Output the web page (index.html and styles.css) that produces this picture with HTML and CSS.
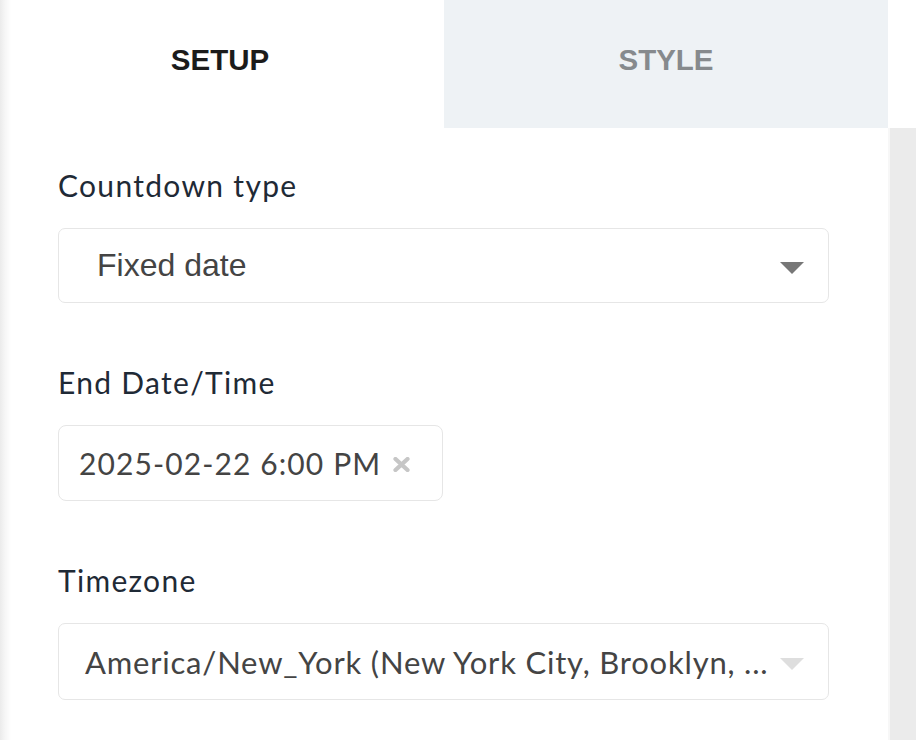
FILE: index.html
```html
<!DOCTYPE html>
<html lang="en">
<head>
<meta charset="utf-8">
<title>Countdown setup</title>
<link rel="stylesheet" href="styles.css">
</head>
<body>
<div class="panel">
  <div class="tabs">
    <div class="tab tab-active">SETUP</div>
    <div class="tab tab-idle">STYLE</div>
  </div>
  <div class="content">
    <div class="field">
      <div class="label">Countdown type</div>
      <div class="select select-wide">
        <span class="select-text">Fixed date</span>
        <span class="caret caret-dark"></span>
      </div>
    </div>
    <div class="field">
      <div class="label">End Date/Time</div>
      <div class="datebox">
        <span class="date-text">2025-02-22 6:00 PM</span>
        <svg class="clear" width="17" height="15" viewBox="0 0 17 15" aria-hidden="true">
          <path d="M2.5 2 L14.5 13 M14.5 2 L2.5 13" stroke="#c6c6c6" stroke-width="4.2" stroke-linecap="round"/>
        </svg>
      </div>
    </div>
    <div class="field">
      <div class="label">Timezone</div>
      <div class="select select-wide tz">
        <span class="tz-text">America/New_York (New York City, Brooklyn, ...</span>
        <span class="caret caret-light"></span>
      </div>
    </div>
  </div>
</div>
<div class="scroll">
  <div class="scroll-top"></div>
  <div class="scroll-track"></div>
</div>
</body>
</html>
```
FILE: styles.css
```css
html, body {
  margin: 0;
  padding: 0;
  height: 740px;
  overflow: hidden;
  background: #ffffff;
}
body {
  display: flex;
  font-family: "Lato", "Open Sans", sans-serif;
}
.panel {
  flex: 0 0 888px;
  height: 740px;
  background: linear-gradient(to right, #ebebeb 0px, #f6f6f6 5px, #ffffff 11px);
  display: flex;
  flex-direction: column;
}
.tabs {
  display: grid;
  grid-template-columns: 444px 444px;
  height: 128px;
}
.tab {
  display: flex;
  align-items: center;
  justify-content: center;
  font-family: "Liberation Sans", Arial, sans-serif;
  font-weight: 700;
  font-size: 29.5px;
  padding-bottom: 8px;
  box-sizing: border-box;
}
.tab-active {
  color: #1b1b1b;
  padding-right: 4px;
}
.tab-idle {
  background: #eef2f5;
  color: #868a8d;
}
.content {
  padding: 39px 0 0 58px;
  display: flex;
  flex-direction: column;
  gap: 61px;
}
.field {
  display: flex;
  flex-direction: column;
  gap: 25px;
}
.label {
  font-size: 30px;
  line-height: 36px;
  color: #1f2a36;
  letter-spacing: 1.3px;
  padding-left: 0;
}
.select {
  box-sizing: border-box;
  height: 75px;
  border: 1px solid #e6e6e6;
  border-radius: 7px;
  background: #fff;
  display: flex;
  align-items: center;
}
.select-wide {
  width: 771px;
}
.select-text {
  font-family: "Liberation Sans", Arial, sans-serif;
  font-size: 32px;
  color: #444;
  padding-left: 38px;
  flex: 1;
}
.caret {
  width: 0;
  height: 0;
  border-left: 12.5px solid transparent;
  border-right: 12.5px solid transparent;
  border-top: 12px solid #777;
  margin-right: 24px;
  margin-top: 4px;
}
.caret-light {
  border-top-color: #dedede;
}
.datebox {
  box-sizing: border-box;
  width: 385px;
  height: 76px;
  border: 1px solid #e6e6e6;
  border-radius: 8px;
  display: flex;
  align-items: center;
  padding-left: 20px;
}
.date-text {
  font-size: 30px;
  color: #444;
  letter-spacing: 1.1px;
}
.clear {
  margin-left: 12px;
  margin-top: 2px;
}
.tz {
  height: 77px;
}
.tz-text {
  flex: 1;
  font-size: 31px;
  color: #444;
  letter-spacing: 0.8px;
  padding-left: 26px;
  white-space: nowrap;
  overflow: hidden;
}
.scroll {
  flex: 0 0 28px;
  display: flex;
  flex-direction: column;
}
.scroll-top {
  height: 128px;
  background: #fff;
}
.scroll-track {
  flex: 1;
  background: #ebebeb;
  border-left: 2px solid #f7f7f7;
}
```
